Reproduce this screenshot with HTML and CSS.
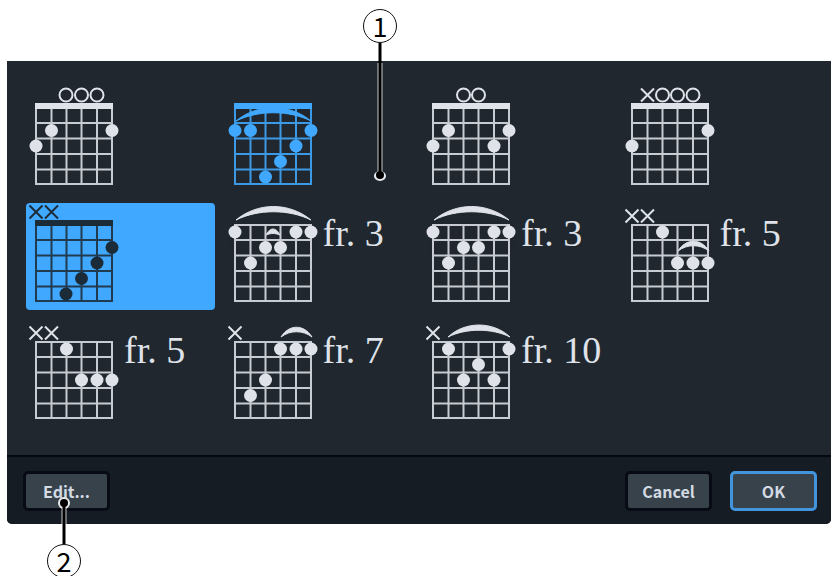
FILE: index.html
```
<!DOCTYPE html>
<html lang="en">

<head>
    <meta charset="UTF-8">
    <meta name="viewport" content="width=device-width, initial-scale=1">
    <title>Chord Diagrams</title>
    <link rel="stylesheet" href="styles.css">
</head>

<body>
    <!-- shared pieces of the diagrams -->
    <svg class="defs" aria-hidden="true">
        <symbol id="fretboard" viewBox="0 0 98 107">
            <path d="M10 21V99M25.5 21V99M40.5 21V99M55.5 21V99M71 21V99M86 21V99M9 22H87M9 37H87M9 52.5H87M9 68H87M9 83.5H87M9 98H87" fill="none" stroke="currentColor" stroke-width="2" />
        </symbol>
        <symbol id="nut" viewBox="0 0 98 107">
            <path d="M9 17H87V23H9Z" fill="currentColor" />
        </symbol>
        <circle id="dot" r="6.5" fill="currentColor" />
        <circle id="open" r="6.5" fill="none" stroke="currentColor" stroke-width="2" />
        <path id="muted" d="M-6.5 -6.5L6.5 6.5M6.5 -6.5L-6.5 6.5" fill="none" stroke="currentColor" stroke-width="2" />
        <path id="barre" d="M11 17C33 -1 64 -1 86 17C64 6 33 6 11 17Z" fill="currentColor" stroke="currentColor" />
        <path id="barre-3" d="M56 17C64 4 79 4 87 17C78 10 65 10 56 17Z" fill="currentColor" stroke="currentColor" />
    </svg>

    <main class="page">
        <div class="dialog" role="dialog" aria-label="Chord Diagrams">
            <div class="chords">
                <button class="chord" type="button">
                    <svg class="diagram" viewBox="0 0 98 107">
                        <use class="lines" href="#fretboard" />
                        <use href="#nut" />
                        <use href="#open" x="40" y="9" />
                        <use href="#open" x="55.5" y="9" />
                        <use href="#open" x="71" y="9" />
                        <use href="#dot" x="10" y="60" />
                        <use href="#dot" x="25.5" y="44.5" />
                        <use href="#dot" x="86" y="44.5" />
                    </svg>
                </button>
                <button class="chord current" type="button">
                    <svg class="diagram" viewBox="0 0 98 107">
                        <use class="lines" href="#fretboard" />
                        <use href="#nut" />
                        <use href="#barre" y="18" />
                        <use href="#dot" x="10" y="44.5" />
                        <use href="#dot" x="25.5" y="44.5" />
                        <use href="#dot" x="86" y="44.5" />
                        <use href="#dot" x="71" y="60" />
                        <use href="#dot" x="55.5" y="75.5" />
                        <use href="#dot" x="40.5" y="91" />
                    </svg>
                </button>
                <button class="chord" type="button">
                    <svg class="diagram" viewBox="0 0 98 107">
                        <use class="lines" href="#fretboard" />
                        <use href="#nut" />
                        <use href="#open" x="40.5" y="9" />
                        <use href="#open" x="55.5" y="9" />
                        <use href="#dot" x="10" y="60" />
                        <use href="#dot" x="25.5" y="44.5" />
                        <use href="#dot" x="71" y="60" />
                        <use href="#dot" x="86" y="44.5" />
                    </svg>
                </button>
                <button class="chord" type="button">
                    <svg class="diagram" viewBox="0 0 98 107">
                        <use class="lines" href="#fretboard" />
                        <use href="#nut" />
                        <use href="#muted" x="25.5" y="9" />
                        <use href="#open" x="40.5" y="9" />
                        <use href="#open" x="55.5" y="9" />
                        <use href="#open" x="71" y="9" />
                        <use href="#dot" x="10" y="60" />
                        <use href="#dot" x="86" y="44.5" />
                    </svg>
                </button>

                <button class="chord selected" type="button" aria-pressed="true">
                    <svg class="diagram" viewBox="0 0 98 107">
                        <use class="lines" href="#fretboard" />
                        <use href="#nut" />
                        <use href="#muted" x="10" y="9" />
                        <use href="#muted" x="25.5" y="9" />
                        <use href="#dot" x="86" y="44.5" />
                        <use href="#dot" x="71" y="60" />
                        <use href="#dot" x="55.5" y="75.5" />
                        <use href="#dot" x="40" y="91" />
                    </svg>
                </button>
                <button class="chord" type="button">
                    <svg class="diagram" viewBox="0 0 98 107">
                        <use class="lines" href="#fretboard" />
                        <use href="#barre" />
                        <path d="M41 32C45 24 51 24 55 32C50 30 46 30 41 32Z" fill="currentColor" stroke="currentColor" />
                        <use href="#dot" x="10" y="29" />
                        <use href="#dot" x="71" y="29" />
                        <use href="#dot" x="86" y="29" />
                        <use href="#dot" x="40.5" y="44.5" />
                        <use href="#dot" x="55.5" y="44.5" />
                        <use href="#dot" x="25.5" y="60" />
                    </svg>
                    <span class="fret">fr. 3</span>
                </button>
                <button class="chord" type="button">
                    <svg class="diagram" viewBox="0 0 98 107">
                        <use class="lines" href="#fretboard" />
                        <use href="#barre" />
                        <use href="#dot" x="10" y="29" />
                        <use href="#dot" x="71" y="29" />
                        <use href="#dot" x="86" y="29" />
                        <use href="#dot" x="40.5" y="44.5" />
                        <use href="#dot" x="55.5" y="44.5" />
                        <use href="#dot" x="25.5" y="60" />
                    </svg>
                    <span class="fret">fr. 3</span>
                </button>
                <button class="chord" type="button">
                    <svg class="diagram" viewBox="0 0 98 107">
                        <use class="lines" href="#fretboard" />
                        <use href="#muted" x="10" y="13" />
                        <use href="#muted" x="25.5" y="13" />
                        <use href="#barre-3" y="31" />
                        <use href="#dot" x="40.5" y="29" />
                        <use href="#dot" x="55.5" y="60" />
                        <use href="#dot" x="71" y="60" />
                        <use href="#dot" x="86" y="60" />
                    </svg>
                    <span class="fret">fr. 5</span>
                </button>

                <button class="chord" type="button">
                    <svg class="diagram" viewBox="0 0 98 107">
                        <use class="lines" href="#fretboard" />
                        <use href="#muted" x="10" y="13" />
                        <use href="#muted" x="25.5" y="13" />
                        <use href="#dot" x="40.5" y="29" />
                        <use href="#dot" x="55.5" y="60" />
                        <use href="#dot" x="71" y="60" />
                        <use href="#dot" x="86" y="60" />
                    </svg>
                    <span class="fret">fr. 5</span>
                </button>
                <button class="chord" type="button">
                    <svg class="diagram" viewBox="0 0 98 107">
                        <use class="lines" href="#fretboard" />
                        <use href="#muted" x="10" y="13" />
                        <use href="#barre-3" />
                        <use href="#dot" x="55.5" y="29" />
                        <use href="#dot" x="71" y="29" />
                        <use href="#dot" x="86" y="29" />
                        <use href="#dot" x="40.5" y="60" />
                        <use href="#dot" x="25.5" y="75.5" />
                    </svg>
                    <span class="fret">fr. 7</span>
                </button>
                <button class="chord" type="button">
                    <svg class="diagram" viewBox="0 0 98 107">
                        <use class="lines" href="#fretboard" />
                        <use href="#muted" x="10" y="13" />
                        <path d="M25 17C42 1 70 1 87 17C69 8 43 8 25 17Z" fill="currentColor" stroke="currentColor" />
                        <use href="#dot" x="25.5" y="29" />
                        <use href="#dot" x="86" y="29" />
                        <use href="#dot" x="55.5" y="44.5" />
                        <use href="#dot" x="40.5" y="60" />
                        <use href="#dot" x="71" y="60" />
                    </svg>
                    <span class="fret">fr. 10</span>
                </button>
            </div>

            <div class="actions">
                <button class="action" type="button">Edit...</button>
                <div class="confirm">
                    <button class="action" type="button">Cancel</button>
                    <button class="action ok" type="button">OK</button>
                </div>
            </div>
        </div>

        <!-- numbered callouts -->
        <div class="callout first">
            <span class="number">1</span>
            <svg class="pointer" width="14" height="140" viewBox="0 0 14 140">
                <path d="M7 20V132" stroke="#c4c7c9" stroke-width="5" />
                <ellipse cx="7" cy="133" rx="6" ry="5" fill="#e8eaec" />
                <path d="M7 0V132" stroke="#000" stroke-width="3" />
                <circle cx="7" cy="132" r="4" />
            </svg>
        </div>
        <div class="callout second">
            <svg class="pointer" width="14" height="47" viewBox="0 0 14 47">
                <path d="M7 6V27" stroke="#c4c7c9" stroke-width="5" />
                <circle cx="7" cy="6" r="6" fill="#e8eaec" />
                <path d="M7 6V47" stroke="#000" stroke-width="3" />
                <circle cx="7" cy="6" r="4" />
            </svg>
            <span class="number">2</span>
        </div>
    </main>
</body>

</html>
```

FILE: styles.css
```
* {
    box-sizing: border-box;
}

body {
    margin: 0;
    background: #fff;
    font-family: "Noto Sans CJK JP", "Noto Sans", sans-serif;
}

.defs {
    position: absolute;
    width: 0;
    height: 0;
}

.page {
    position: relative;
    min-height: 100vh;
    padding: 61px 4px 52px 7px;
    overflow: hidden;
}

.dialog {
    background: #20272e;
    border-radius: 0 0 5px 5px;
    overflow: hidden;
}

.chords {
    display: grid;
    grid-template-columns: repeat(4, 1fr);
    gap: 10px;
    padding: 25px 21px 28px 19px;
}

.chord {
    display: flex;
    align-items: flex-start;
    padding: 0;
    border: none;
    border-radius: 4px;
    background: none;
    color: #dfe3e9;
}

.chord .lines {
    opacity: .88;
}

.chord.current {
    color: #40a9ff;
}

.chord.selected {
    background: #40a9ff;
    color: #1c2b38;
}

.diagram {
    flex: none;
    width: 98px;
    height: 107px;
}

.fret {
    padding-top: 10px;
    font-family: "Liberation Serif", serif;
    font-size: 38px;
    line-height: 40px;
    white-space: nowrap;
}

.actions {
    display: flex;
    justify-content: space-between;
    padding: 14px 14px 13px 16px;
    border-top: 2px solid #05080c;
    background: #161c23;
}

.confirm {
    display: flex;
    gap: 18px;
}

.action {
    width: 87px;
    height: 40px;
    padding: 0;
    border: 3px solid #080b13;
    border-radius: 5px;
    background: #38424b;
    color: #d3dae3;
    font-family: inherit;
    font-size: 16px;
    font-weight: 700;
    line-height: 24px;
}

.action.ok {
    border-color: #4295dc;
}

.callout {
    position: absolute;
    display: flex;
    flex-direction: column;
    align-items: center;
    width: 34px;
}

.first {
    top: 9px;
    left: 363px;
}

.second {
    top: 497px;
    left: 47px;
}

.number {
    display: grid;
    place-items: center;
    width: 34px;
    height: 34px;
    border: 1px solid #111;
    border-radius: 50%;
    background: #fff;
    color: #000;
    font-size: 27px;
    line-height: 24px;
}

.pointer {
    display: block;
}
```
